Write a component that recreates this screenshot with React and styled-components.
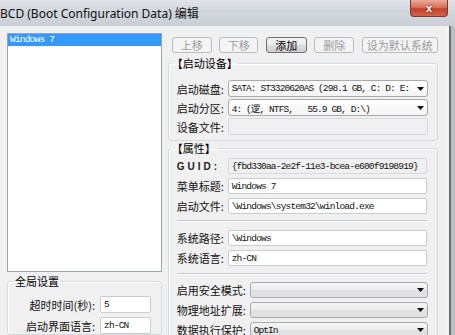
import React from 'react';
import styled, { createGlobalStyle } from 'styled-components';

const Global = createGlobalStyle`
  html, body { margin: 0; padding: 0; }
  body {
    width: 455px; height: 335px; overflow: hidden; background: #f0f0f0;
    font-family: "Noto Sans CJK SC", "Noto Sans", sans-serif;
  }
`;

const MONO = `"Liberation Mono", "Noto Sans CJK SC", monospace`;

const Window = styled.div`
  width: 455px; height: 335px; display: flex; flex-direction: column;
  overflow: hidden; background: #f0f0f0;
`;

const TitleBar = styled.div`
  position: relative; flex: none; height: 26px; display: flex; align-items: center;
  background: linear-gradient(to bottom, #dfe3e8 0%, #d2d7dd 45%, #c9cfd6 100%);
`;

const TitleText = styled.div`
  font-family: "Noto Sans", "Noto Sans CJK SC", sans-serif;
  font-size: 12px; color: #111; white-space: nowrap; margin-top: -1px;
`;

const CloseButton = styled.div`
  position: absolute; top: 0; right: 7px; width: 38px; height: 17px;
  box-sizing: border-box; border: 1px solid #7a3a30; border-top: none;
  border-radius: 0 0 4px 4px;
  background: linear-gradient(to bottom, #e9a99a 0%, #d9725d 45%, #c4402a 55%, #d4624a 100%);
  display: flex; align-items: center; justify-content: center;
  color: #fff; font-family: "Liberation Sans", sans-serif; font-weight: bold; font-size: 11px;
  text-shadow: 0 0 2px #5a1b10;
`;

const Main = styled.div`
  flex: 1; display: flex; min-height: 0;
`;

const LeftColumn = styled.div`
  width: 155px; margin-left: 7px; padding-top: 7px; display: flex; flex-direction: column;
`;

const ListBox = styled.div`
  height: 241px; box-sizing: border-box; border: 1px solid #9ea3aa; background: #fff;
  padding: 0;
`;

const ListItem = styled.div`
  height: 12px; background: ${p => (p.$selected ? '#3399ff' : 'transparent')};
  color: ${p => (p.$selected ? '#fff' : '#000')};
  font-family: ${MONO}; font-size: 9.5px; letter-spacing: -0.8px; line-height: 12px;
  padding-left: 2px; white-space: nowrap;
`;

const Group = styled.fieldset`
  margin: ${p => p.$mt || 0}px 0 0 0; padding: ${p => p.$pt || 0}px 0 ${p => p.$pb || 0}px ${p => p.$pl || 8}px;
  border: 1px solid #d6dbe0; border-radius: 3px; min-inline-size: 0;
  display: flex; flex-direction: column; gap: ${p => p.$gap || 0}px;
  box-shadow: inset 1px 1px 0 #fff;
`;

const Legend = styled.legend`
  padding: 0 1px; margin-left: ${p => p.$ml || 0}px;
  font-size: 11px; line-height: 14px; color: #000; white-space: nowrap;
`;

const Row = styled.div`
  display: grid; grid-template-columns: ${p => p.$label}px ${p => p.$field}px;
  align-items: center; height: ${p => p.$h || 16}px;
`;

const Label = styled.div`
  font-size: 11px; color: #111; white-space: nowrap;
  text-align: ${p => (p.$right ? 'right' : 'left')};
  padding-right: ${p => (p.$right ? 5 : 0)}px;
`;

const GuidLabel = styled.div`
  font-family: "Liberation Sans", sans-serif; font-weight: bold; font-size: 10px;
  letter-spacing: 3px; color: #222;
`;

const TextBox = styled.div`
  height: 100%; box-sizing: border-box; border: 1px solid ${p => (p.$readonly ? '#d7dade' : '#c9cdd2')};
  border-radius: 2px; background: ${p => (p.$readonly ? '#f0f0f0' : '#fff')};
  font-family: ${MONO}; font-size: 9.5px; letter-spacing: -0.8px; color: #111;
  display: flex; align-items: center; padding-left: 3px; white-space: nowrap; overflow: hidden;
`;

const Combo = styled.div`
  height: 100%; box-sizing: border-box; border: 1px solid #a7a9ad; border-radius: 3px;
  background: ${p => (p.$white
    ? 'linear-gradient(to bottom, #ffffff, #f4f4f4)'
    : 'linear-gradient(to bottom, #f4f4f4 0%, #ececec 50%, #dfdfdf 51%, #e3e3e3 100%)')};
  display: flex; align-items: center; padding: 0 3px 0 3px; gap: 2px;
`;

const ComboText = styled.div`
  flex: 1; min-width: 0; overflow: hidden; white-space: pre;
  font-family: ${MONO}; font-size: 9.5px; letter-spacing: -0.9px; color: #111;
`;

const Arrow = () => (
  <svg width="7" height="4" viewBox="0 0 7 4" style={{ flex: 'none' }}>
    <polygon points="0,0 7,0 3.5,4" fill="#111" />
  </svg>
);

const RightColumn = styled.div`
  width: 271px; margin-left: 6px; padding-top: 11px; display: flex; flex-direction: column;
`;

const ButtonBar = styled.div`
  display: flex; justify-content: space-between; padding-left: 4px; width: 266px; height: 16px;
`;

const Button = styled.div`
  width: ${p => p.$w}px; height: 16px; box-sizing: border-box; border-radius: 3px;
  border: 1px solid ${p => (p.$disabled ? '#b9bcc0' : '#707070')};
  background: ${p => (p.$disabled
    ? '#f4f4f4'
    : 'linear-gradient(to bottom, #f2f2f2 0%, #ebebeb 50%, #dddddd 51%, #cfcfcf 100%)')};
  color: ${p => (p.$disabled ? '#9a9a9a' : '#000')};
  font-size: 11px; display: flex; align-items: center; justify-content: center;
`;

const Separator = styled.div`
  height: 1px; width: 250px; background: #c5c9ce; box-shadow: 0 1px 0 #fff;
  margin: ${p => p.$top}px 0 ${p => p.$bottom}px 0;
`;

const Frame = styled.div`
  width: 8px; margin-left: 8px; display: flex;
  border-left: 1px solid #f8f8f8;
`;

const FrameLine = styled.div`
  width: 2px; margin-left: 2px; background: #707070;
`;

const FrameOuter = styled.div`
  flex: 1; background: #b9bfc6;
`;

export default function App() {
  return (
    <>
      <Global />
      <Window>
        <TitleBar>
          <TitleText>BCD (Boot Configuration Data) 编辑</TitleText>
          <CloseButton>x</CloseButton>
        </TitleBar>
        <Main>
          <LeftColumn>
            <ListBox>
              <ListItem $selected>Windows 7</ListItem>
            </ListBox>
            <Group $mt={2} $pt={8} $pl={6} $gap={4}>
              <Legend>全局设置</Legend>
              <Row $label={86} $field={51} $h={17}>
                <Label $right>超时时间(秒):</Label>
                <TextBox>5</TextBox>
              </Row>
              <Row $label={86} $field={51} $h={17}>
                <Label $right>启动界面语言:</Label>
                <TextBox>zh-CN</TextBox>
              </Row>
            </Group>
          </LeftColumn>
          <RightColumn>
            <ButtonBar>
              <Button $w={40} $disabled>上移</Button>
              <Button $w={39} $disabled>下移</Button>
              <Button $w={41}>添加</Button>
              <Button $w={40} $disabled>删除</Button>
              <Button $w={76} $disabled>设为默认系统</Button>
            </ButtonBar>
            <Group $mt={3} $pt={10} $pb={5} $gap={2} $pl={8}>
              <Legend $ml={-6}>【启动设备】</Legend>
              <Row $label={51} $field={200} $h={17}>
                <Label>启动磁盘:</Label>
                <Combo $white>
                  <ComboText>SATA: ST3320620AS (298.1 GB, C: D: E:</ComboText>
                  <Arrow />
                </Combo>
              </Row>
              <Row $label={51} $field={200} $h={17}>
                <Label>启动分区:</Label>
                <Combo $white>
                  <ComboText>4: (逻, NTFS,   55.9 GB, D:\)</ComboText>
                  <Arrow />
                </Combo>
              </Row>
              <Row $label={51} $field={200} $h={17}>
                <Label>设备文件:</Label>
                <TextBox $readonly />
              </Row>
            </Group>
            <Group $pt={3} $pb={20} $gap={4} $pl={8}>
              <Legend $ml={-6}>【属性】</Legend>
              <Row $label={51} $field={199}>
                <GuidLabel>GUID:</GuidLabel>
                <TextBox $readonly>{'{fbd330aa-2e2f-11e3-bcea-e600f9198919}'}</TextBox>
              </Row>
              <Row $label={51} $field={199}>
                <Label>菜单标题:</Label>
                <TextBox>Windows 7</TextBox>
              </Row>
              <Row $label={51} $field={199}>
                <Label>启动文件:</Label>
                <TextBox>{'\\Windows\\system32\\winload.exe'}</TextBox>
              </Row>
              <Separator $top={2} $bottom={5} />
              <Row $label={51} $field={199}>
                <Label>系统路径:</Label>
                <TextBox>{'\\Windows'}</TextBox>
              </Row>
              <Row $label={51} $field={199}>
                <Label>系统语言:</Label>
                <TextBox>zh-CN</TextBox>
              </Row>
              <Separator $top={3} $bottom={4} />
              <Row $label={73} $field={178}>
                <Label>启用安全模式:</Label>
                <Combo><ComboText /><Arrow /></Combo>
              </Row>
              <Row $label={73} $field={178}>
                <Label>物理地址扩展:</Label>
                <Combo><ComboText /><Arrow /></Combo>
              </Row>
              <Row $label={73} $field={178}>
                <Label>数据执行保护:</Label>
                <Combo><ComboText>OptIn</ComboText><Arrow /></Combo>
              </Row>
            </Group>
          </RightColumn>
          <Frame>
            <FrameLine />
            <FrameOuter />
          </Frame>
        </Main>
      </Window>
    </>
  );
}
